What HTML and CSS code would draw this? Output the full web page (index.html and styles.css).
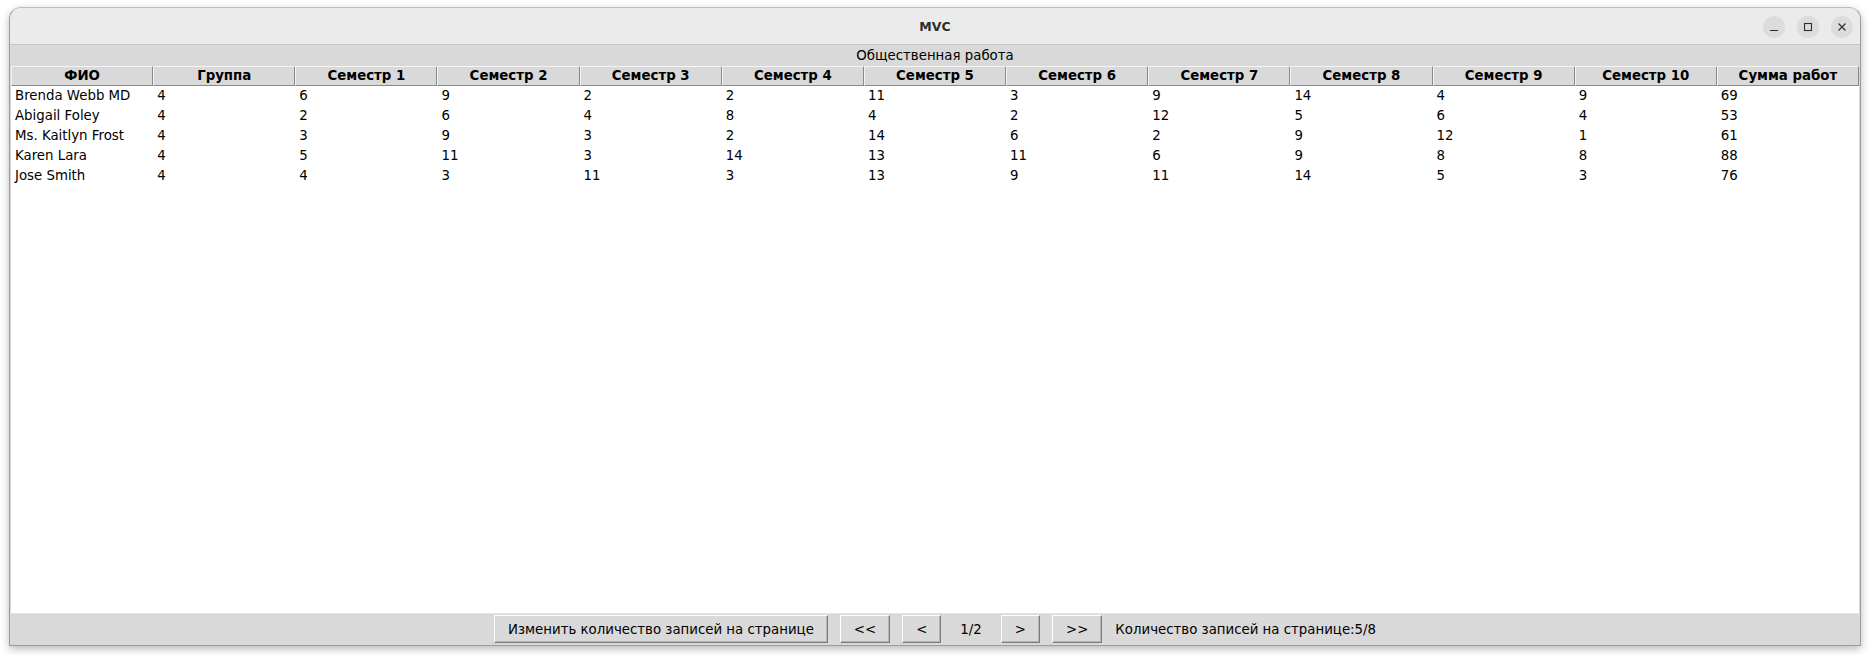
FILE: index.html
```html
<!DOCTYPE html>
<html lang="ru">
<head>
<meta charset="utf-8">
<title>MVC</title>
<link rel="stylesheet" href="styles.css">
</head>
<body>
<div class="window">
  <div class="titlebar">
    <div class="tb-side"></div>
    <div class="tb-title">MVC</div>
    <div class="tb-side tb-controls">
      <span class="tb-btn"><svg width="10" height="10" viewBox="0 0 10 10"><path d="M1 8.5H9" stroke="#2e2e2e" stroke-width="1.2" fill="none"/></svg></span>
      <span class="tb-btn"><svg width="10" height="10" viewBox="0 0 10 10"><rect x="1.5" y="1.5" width="7" height="7" stroke="#2e2e2e" stroke-width="1.1" fill="none"/></svg></span>
      <span class="tb-btn"><svg width="10" height="10" viewBox="0 0 10 10"><path d="M1.5 1.5L8.5 8.5M8.5 1.5L1.5 8.5" stroke="#2e2e2e" stroke-width="1.2" fill="none"/></svg></span>
    </div>
  </div>
  <div class="caption">Общественная работа</div>
  <div class="tablearea">
    <div class="grid head">
      <div class="th">ФИО</div><div class="th">Группа</div><div class="th">Семестр 1</div><div class="th">Семестр 2</div><div class="th">Семестр 3</div><div class="th">Семестр 4</div><div class="th">Семестр 5</div><div class="th">Семестр 6</div><div class="th">Семестр 7</div><div class="th">Семестр 8</div><div class="th">Семестр 9</div><div class="th">Семестр 10</div><div class="th">Сумма работ</div>
    </div>
    <div class="grid row"><div>Brenda Webb MD</div><div>4</div><div>6</div><div>9</div><div>2</div><div>2</div><div>11</div><div>3</div><div>9</div><div>14</div><div>4</div><div>9</div><div>69</div></div>
    <div class="grid row"><div>Abigail Foley</div><div>4</div><div>2</div><div>6</div><div>4</div><div>8</div><div>4</div><div>2</div><div>12</div><div>5</div><div>6</div><div>4</div><div>53</div></div>
    <div class="grid row"><div>Ms. Kaitlyn Frost</div><div>4</div><div>3</div><div>9</div><div>3</div><div>2</div><div>14</div><div>6</div><div>2</div><div>9</div><div>12</div><div>1</div><div>61</div></div>
    <div class="grid row"><div>Karen Lara</div><div>4</div><div>5</div><div>11</div><div>3</div><div>14</div><div>13</div><div>11</div><div>6</div><div>9</div><div>8</div><div>8</div><div>88</div></div>
    <div class="grid row"><div>Jose Smith</div><div>4</div><div>4</div><div>3</div><div>11</div><div>3</div><div>13</div><div>9</div><div>11</div><div>14</div><div>5</div><div>3</div><div>76</div></div>
  </div>
  <div class="pager">
    <button class="btn">Изменить количество записей на странице</button>
    <button class="btn">&lt;&lt;</button>
    <button class="btn">&lt;</button>
    <span class="page">1/2</span>
    <button class="btn">&gt;</button>
    <button class="btn">&gt;&gt;</button>
    <span class="count">Количество записей на странице:5/8</span>
  </div>
</div>
</body>
</html>
```

FILE: styles.css
```css
* { box-sizing: border-box; }
html, body {
  margin: 0;
  padding: 0;
  width: 1870px;
  height: 655px;
  background: #ffffff;
  overflow: hidden;
}
body {
  font-family: "DejaVu Sans", sans-serif;
  font-size: 13.333px;
  color: #000;
}
.window {
  margin: 7px 0 0 9px;
  width: 1852px;
  height: 639px;
  border: 1px solid #9c9c9c;
  border-top-color: #bcbcbc;
  border-radius: 12px 12px 0 0;
  background: #d9d9d9;
  box-shadow: 0 3px 9px rgba(0, 0, 0, 0.28);
  display: flex;
  flex-direction: column;
  overflow: hidden;
}
.titlebar {
  height: 37px;
  flex: none;
  background: #ebebeb;
  border-bottom: 1px solid #c4c4c4;
  display: grid;
  grid-template-columns: 1fr auto 1fr;
  align-items: center;
}
.tb-title {
  font-family: "DejaVu Sans", sans-serif;
  font-weight: bold;
  font-size: 12.5px;
  color: #2e2e2e;
  padding-top: 1px;
}
.tb-controls {
  display: flex;
  justify-content: flex-end;
  gap: 12px;
  padding-right: 7px;
  padding-top: 1px;
}
.tb-btn {
  width: 22px;
  height: 22px;
  border-radius: 50%;
  background: #dcdcdc;
  display: flex;
  align-items: center;
  justify-content: center;
}
.caption {
  height: 21px;
  flex: none;
  line-height: 21px;
  text-align: center;
  background: #d9d9d9;
}
.tablearea {
  flex: 1;
  margin: 0 1px 0 1px;
  background: #ffffff;
}
.grid {
  display: grid;
  grid-template-columns: repeat(13, 1fr);
}
.head {
  height: 20px;
  background: #d9d9d9;
}
.th {
  font-weight: bold;
  text-align: center;
  line-height: 18px;
  border-top: 1px solid #f4f4f4;
  border-left: 1px solid #f4f4f4;
  border-right: 1px solid #8a8a8a;
  border-bottom: 1px solid #8a8a8a;
  white-space: nowrap;
  overflow: hidden;
}
.row {
  height: 20px;
  line-height: 20px;
}
.row > div {
  padding-left: 4px;
  white-space: nowrap;
}
.pager {
  height: 32px;
  flex: none;
  border-top: 1px solid #e4e4e4;
  background: #d9d9d9;
  display: flex;
  justify-content: center;
  align-items: center;
  gap: 12px;
  padding-bottom: 1px;
}
.btn {
  font-family: "DejaVu Sans", sans-serif;
  font-size: 13.333px;
  color: #000;
  height: 28px;
  padding: 0 13px;
  background: #d9d9d9;
  border-top: 1px solid #ffffff;
  border-left: 1px solid #ffffff;
  border-right: 1px solid #7c7c7c;
  border-bottom: 1px solid #7c7c7c;
  box-shadow: inset -1px -1px 0 #b4b4b4;
  border-radius: 0;
  margin: 0;
}
.page {
  padding: 0 7px;
}
.count {
  padding-left: 1px;
}
```
